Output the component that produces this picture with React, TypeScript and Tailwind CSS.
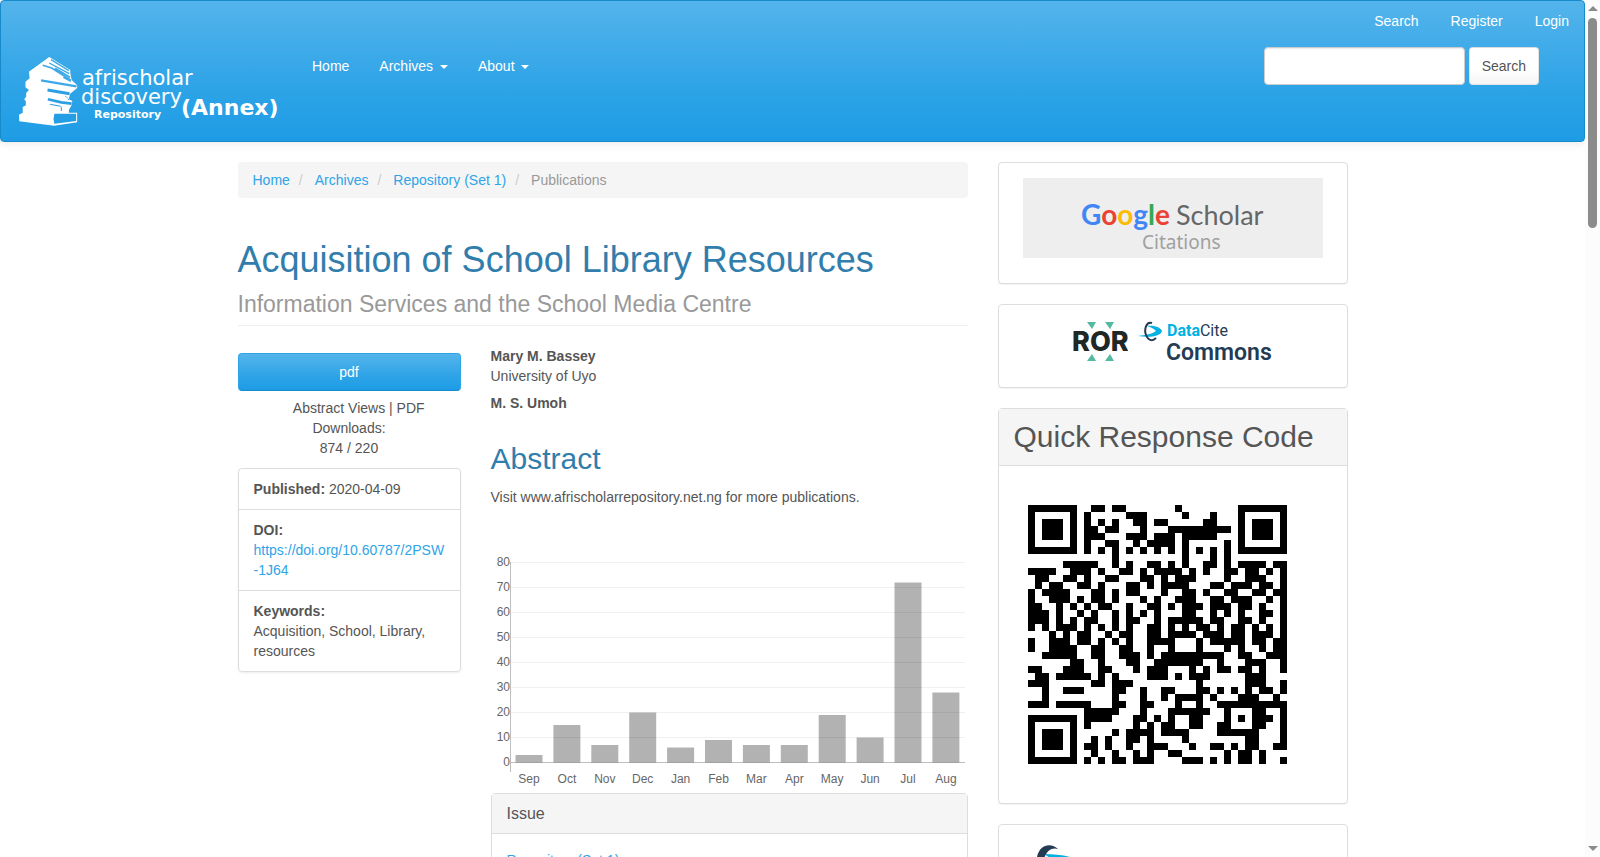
import { FormEvent, ReactNode, useState } from 'react';

const userLinks = ['Search', 'Register', 'Login'];

const crumbs = ['Home', 'Archives', 'Repository (Set 1)'];

const downloads = [
  { month: 'Sep', count: 3 },
  { month: 'Oct', count: 15 },
  { month: 'Nov', count: 7 },
  { month: 'Dec', count: 20 },
  { month: 'Jan', count: 6 },
  { month: 'Feb', count: 9 },
  { month: 'Mar', count: 7 },
  { month: 'Apr', count: 7 },
  { month: 'May', count: 19 },
  { month: 'Jun', count: 10 },
  { month: 'Jul', count: 72 },
  { month: 'Aug', count: 28 },
];

// approximate modules, not a scannable code
const qrRows = [
  '#######..##.##.......#........#######',
  '#.....#.#.....###.....#...#...#.....#',
  '#.###.#.#.#.#..##.##.....##...#.###.#',
  '#.###.#.##.##...#...#########.#.###.#',
  '#.###.#.###...###.###.#####...#.###.#',
  '#.....#.#..##..#.####.#.....#.#.....#',
  '#######.#.#.#.#.#.#.#.#.#.#.#.#######',
  '............#.........#...#.#........',
  '.....#####..#.#..##.#.#..##.#.####.##',
  '####..###.#..##.#.####.#.#..##.##.#.#',
  '.##..##.#..##...##.#.###....#..###..#',
  '.#.##..##.#...##.#.####...##.###.##.#',
  '#.####...##.#.##...#..##.#..##..##.##',
  '#..###.#.##.#...#.#..###..##.###..#.#',
  '##..#.#.#.##..#..##.#.###.###.##.#..#',
  '###.#..#.#..#.#.#.#...##..#.#.#..##.#',
  '###.#.#.##..#.##..#.#####.##..##.#..#',
  '#.#.###.#.#.#.#..##.#.#.##.#.##.#.#.#',
  '...#.#.##..#.##..##.####.###.##.###.#',
  '#..###.##.#.#.#..####...#.#####.##.##',
  '#..####..##..##..#..#...#...#.#..#.##',
  '..#####..##..###.#.#########..##..###',
  '......##..#...##..#######..#...###..#',
  '##...###..##...#.###...#.#.##.##.#..#',
  '.##.#####.#.#....###.#.###.....###...',
  '###......##.###.........#......###..#',
  '..#..###....##..#..##...##.#.#.#.##.#',
  '..#.........#...#..#.####.#...###..#.',
  '###.#####...##..##...#..#..##########',
  '........#####...#...######..#...##..#',
  '#######.####...##.#.#..##...#.#.###.#',
  '#.....#.#......#.#.##..##..##...##..#',
  '#.###.#.....#.####.####....######...#',
  '#.###.#..#.#..##.#....#........##...#',
  '#.###.#.##.#..#..###...#..##.#.##..##',
  '#.....#..#..#..#.#..##......#.##.#...',
  '#######.#.#.##.###....###.#.#.##.#..#',
];

function Caret() {
  return (
    <span className="ml-[3px] inline-block border-x-4 border-t-4 border-x-transparent border-t-white align-middle" />
  );
}

function SiteLogo() {
  return (
    <svg width="270" height="80" viewBox="16 52 270 80" fill="#fff">
      <g transform="scale(0.3444 0.3333)">
        <path d="M143 171L204 210V218L208 240L224 256V264L203 282L200 298L210 303L208 315L200 330V338H224V367L157 377L56 364L55 344L66 338V321L75 316V304L70 298L76 290V279L84 270L74 262V245L86 235L84 215Z" />
        <g fill="none" stroke="#3ea9e8" strokeWidth="5">
          <path d="M148 179L200 212M143 189L201 221" strokeWidth="4" />
          <path d="M124 196L150 204L205 240M160 205L203 232M184 232L206 244" />
          <path d="M119 241L222 259" strokeWidth="7" />
        </g>
        <g fill="none" stroke="#2d9fe3">
          <path d="M138 270L202 281" strokeWidth="9" />
          <path d="M190 288L200 300" strokeWidth="3" strokeDasharray="3 3" />
          <path d="M139 298L178 307L208 311" strokeWidth="8" />
          <path d="M178 320V333M145 313L176 319" strokeWidth="3" />
        </g>
        <path d="M158 341L221 341V363L158 371Q153 356 158 341Z" fill="#239de4" />
      </g>
      <g fontFamily="DejaVu Sans, sans-serif">
        <text x="82" y="85" fontSize="21">
          afrischolar
        </text>
        <text x="81" y="104" fontSize="21">
          discovery
        </text>
        <text x="94" y="118" fontSize="11" fontWeight="700">
          Repository
        </text>
        <text x="181" y="115" fontSize="22" fontWeight="700">
          (Annex)
        </text>
      </g>
    </svg>
  );
}

function Header() {
  const [query, setQuery] = useState<string>('');

  const handleSubmit = (e: FormEvent) => {
    e.preventDefault();
  };

  return (
    <header className="h-[142px] rounded border border-[#178acc] bg-[linear-gradient(#54b4eb,#2fa4e7_60%,#1d9ce5)] text-white shadow-[0_1px_10px_rgba(0,0,0,0.1)]">
      <ul className="flex justify-end gap-8 pr-[15px] pt-[10px]">
        {userLinks.map((link) => (
          <li key={link}>
            <a href="#">{link}</a>
          </li>
        ))}
      </ul>
      <div className="flex items-start pl-[15px] pr-[45px] pt-4">
        <a href="#" aria-label="afrischolar discovery Repository (Annex)" className="mt-[5px]">
          <SiteLogo />
        </a>
        <nav className="ml-[11px] flex pt-[9px]">
          <a href="#" className="px-[15px]">
            Home
          </a>
          <a href="#" className="px-[15px]">
            Archives <Caret />
          </a>
          <a href="#" className="px-[15px]">
            About <Caret />
          </a>
        </nav>
        <form className="ml-auto flex gap-1" onSubmit={handleSubmit}>
          <input
            type="search"
            aria-label="Search Query"
            className="h-[38px] w-[201px] rounded border border-[#ccc] bg-white px-3 text-[#555] shadow-[inset_0_1px_1px_rgba(0,0,0,0.075)]"
            value={query}
            onChange={(e) => setQuery(e.target.value)}
          />
          <button
            type="submit"
            className="h-[38px] rounded border border-black/10 bg-[linear-gradient(#fff,#fff_60%,#f5f5f5)] px-3 text-[#555]"
          >
            Search
          </button>
        </form>
      </div>
    </header>
  );
}

function DownloadsChart() {
  const base = 215;
  const ticks = [0, 10, 20, 30, 40, 50, 60, 70, 80];

  return (
    <svg width="476" height="246" viewBox="0 0 476 246" fontSize="12" fill="#666">
      {ticks.map((tick) => {
        const y = base - tick * 2.5 + 0.5;
        return (
          <g key={tick}>
            <line x1="20" x2="474" y1={y} y2={y} stroke="#000" strokeOpacity={tick ? 0.06 : 0.25} />
            <text x="19" y={y + 3.5} textAnchor="end">
              {tick}
            </text>
          </g>
        );
      })}
      <line x1="19.5" x2="19.5" y1="15" y2="225" stroke="#000" strokeOpacity="0.25" />
      {downloads.map(({ month, count }, i) => {
        const x = 38 + i * 37.9;
        const h = count * 2.5;
        return (
          <g key={month}>
            <rect x={x - 13.5} y={base - h + 0.5} width="27" height={h} fill="#000" fillOpacity="0.3" />
            <text x={x} y="236" textAnchor="middle">
              {month}
            </text>
          </g>
        );
      })}
    </svg>
  );
}

function Panel({ title, large, children }: { title?: string; large?: boolean; children: ReactNode }) {
  return (
    <section className="rounded border border-[#ddd] bg-white shadow-[0_1px_1px_rgba(0,0,0,0.05)]">
      {title && (
        <h2
          className={
            large
              ? 'border-b border-[#ddd] bg-[#f5f5f5] px-[15px] pt-[11px] pb-3 text-[30px] leading-[33px]'
              : 'border-b border-[#ddd] bg-[#f5f5f5] px-[15px] py-[10px] text-base leading-[19px]'
          }
        >
          {title}
        </h2>
      )}
      {children}
    </section>
  );
}

function ScholarLogo() {
  return (
    <svg width="300" height="80" viewBox="0 0 300 80" className="bg-[#eee]">
      <text x="58" y="47" fontFamily="Lato, sans-serif" fontSize="28" fontWeight="700">
        <tspan fill="#4285f4">G</tspan>
        <tspan fill="#ea4335">o</tspan>
        <tspan fill="#fbbc05">o</tspan>
        <tspan fill="#4285f4">g</tspan>
        <tspan fill="#34a853">l</tspan>
        <tspan fill="#ea4335">e</tspan>
      </text>
      <text x="153" y="47" fontFamily="Lato, sans-serif" fontSize="27" fill="#666">
        Scholar
      </text>
      <text x="119" y="71" fontFamily="Noto Sans, sans-serif" fontSize="19" fill="#a0a0a0">
        Citations
      </text>
    </svg>
  );
}

function RorLogo() {
  return (
    <svg width="55" height="42" viewBox="1073 321 55 42">
      <path d="M1087 322h9l-4 7zM1105 322h9l-4 7zM1087 361h9l-4-7zM1105 361h9l-4-7z" fill="#53baa1" />
      <text x="1072" y="351" fontFamily="Inter, sans-serif" fontSize="27" fontWeight="800" fill="#202826">
        ROR
      </text>
    </svg>
  );
}

function Swirl() {
  return (
    <>
      <path d="M1138 335C1146 334 1152 333 1156 330C1153 327 1150 326 1147 325C1155 324 1161 327 1162 330C1161 335 1150 337 1138 335Z" fill="#00b1e2" />
      <path
        d="M1152 322C1146 320 1144 329 1146 334C1148 339 1152 341 1156 337"
        fill="none"
        stroke="#243b54"
        strokeWidth="2"
      />
    </>
  );
}

function DataCiteLogo() {
  return (
    <svg width="135" height="46" viewBox="1138 320 135 46" fontFamily="Roboto, sans-serif">
      <Swirl />
      <text x="1167" y="335" fontSize="16" fontWeight="700" fill="#00b1e2">
        Data
        <tspan fontWeight="400" fill="#243b54">
          Cite
        </tspan>
      </text>
      <text x="1166" y="359" fontSize="23" fontWeight="600" fill="#243b54">
        Commons
      </text>
    </svg>
  );
}

function QrCode() {
  return (
    <svg width="259" height="259" viewBox="0 0 37 37" shapeRendering="crispEdges" aria-label="QR code">
      {qrRows.map((row, y) =>
        row.split('').map((cell, x) => cell === '#' && <rect key={`${x}-${y}`} x={x} y={y} width="1" height="1" />)
      )}
    </svg>
  );
}

function Article() {
  return (
    <main className="w-[760px] px-[15px]">
      <ol className="mb-[42px] flex h-9 items-center rounded bg-[#f5f5f5] px-[15px]">
        {crumbs.map((crumb) => (
          <li key={crumb}>
            <a href="#" className="text-[#2fa4e7]">
              {crumb}
            </a>
            <span className="pl-[9px] pr-3 text-[#ccc]">/</span>
          </li>
        ))}
        <li className="text-[#999]">Publications</li>
      </ol>

      <div className="mb-5 border-b border-[#eee] pb-[7px]">
        <h1 className="text-4xl leading-10 text-[#317eac]">Acquisition of School Library Resources</h1>
        <p className="mt-[10px] text-[23px] leading-7 text-[#999]">Information Services and the School Media Centre</p>
      </div>

      <div className="flex gap-[30px]">
        <div className="w-[223px] pt-[7px]">
          <a
            href="#"
            className="block rounded border border-[#2fa4e7] border-b-[#178acc] bg-[linear-gradient(#54b4eb,#2fa4e7_60%,#1d9ce5)] py-2 text-center text-white"
          >
            pdf
          </a>
          <p className="mt-[7px] whitespace-pre-line text-center">
            {'\u00a0\u00a0\u00a0\u00a0\u00a0Abstract Views | PDF\nDownloads:\n874 / 220'}
          </p>
          <ul className="mt-[10px] divide-y divide-[#ddd] rounded border border-[#ddd] shadow-[0_1px_2px_rgba(0,0,0,0.075)] *:px-[15px] *:py-[10px]">
            <li>
              <strong>Published:</strong> 2020-04-09
            </li>
            <li>
              <strong>DOI:</strong>
              <br />
              <a href="#" className="break-all text-[#2fa4e7]">
                https://doi.org/10.60787/2PSW-1J64
              </a>
            </li>
            <li>
              <strong>Keywords:</strong>
              <br />
              Acquisition, School, Library, resources
            </li>
          </ul>
        </div>

        <div className="flex-1">
          <p className="font-bold">Mary M. Bassey</p>
          <p>University of Uyo</p>
          <p className="mt-[7px] font-bold">M. S. Umoh</p>
          <h2 className="mt-[29px] text-[30px] leading-[33px] text-[#317eac]">Abstract</h2>
          <p className="mt-3 mb-10">Visit www.afrischolarrepository.net.ng for more publications.</p>
          <DownloadsChart />
          <Panel title="Issue">
            <div className="px-[15px] py-4">
              <a href="#" className="text-[#2fa4e7]">
                Repository (Set 1)
              </a>
            </div>
          </Panel>
        </div>
      </div>
    </main>
  );
}

function Sidebar() {
  return (
    <aside className="flex w-[380px] flex-col gap-5 px-[15px]">
      <Panel>
        <div className="flex justify-center pt-[15px] pb-[25px]">
          <ScholarLogo />
        </div>
      </Panel>
      <Panel>
        <div className="flex justify-center gap-[10px] pt-4 pb-5">
          <RorLogo />
          <DataCiteLogo />
        </div>
      </Panel>
      <Panel title="Quick Response Code" large>
        <div className="px-[29px] py-[39px]">
          <QrCode />
        </div>
      </Panel>
      <Panel>
        <div className="px-9 pt-5">
          <svg width="60" height="48" viewBox="0 0 60 48">
            <path d="M9 9C24 9 40 11 52 20L20 36C28 26 24 18 9 9Z" fill="#00b1e2" />
            <path d="M23 4C17 -2 5 -2 2 12V40H9C4 20 10 0 23 4Z" fill="#243b54" />
          </svg>
        </div>
      </Panel>
    </aside>
  );
}

function ScrollRail() {
  return (
    <div className="flex w-[15px] flex-col items-center bg-[#fcfcfc] py-[6px]">
      <span className="border-x-[5px] border-b-[5px] border-x-transparent border-b-[#8b8b8b]" />
      <span className="mt-[7px] h-[210px] w-[9px] rounded-full bg-[#8b8b8b]" />
      <span className="mt-auto border-x-[5px] border-t-[5px] border-x-transparent border-t-[#8b8b8b]" />
    </div>
  );
}

export default function App() {
  return (
    <div className="flex h-screen overflow-hidden bg-white font-['Liberation_Sans',Arial,sans-serif] text-sm leading-5 text-[#555] [&_svg]:block [&_svg]:shrink-0">
      <div className="min-w-0 flex-1">
        <Header />
        <div className="mx-auto mt-5 flex w-full max-w-[1140px] items-start">
          <Article />
          <Sidebar />
        </div>
      </div>
      <ScrollRail />
    </div>
  );
}
